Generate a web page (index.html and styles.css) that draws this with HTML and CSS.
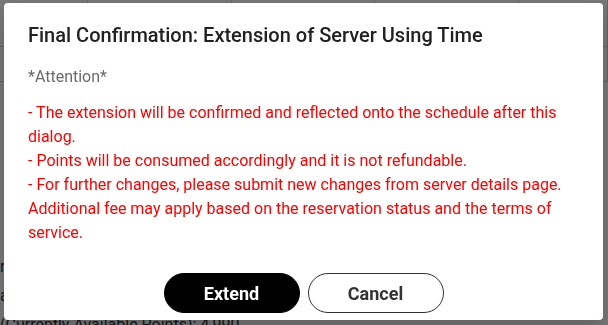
FILE: index.html
```html
<!DOCTYPE html>
<html lang="en">
<head>
<meta charset="utf-8">
<title>Final Confirmation</title>
<link rel="stylesheet" href="styles.css">
</head>
<body>
<div class="page">
  <div class="sheet">
    <div class="cell"></div><div class="cell"></div><div class="cell"></div><div class="cell"></div><div class="cell"></div>
    <div class="cell"></div><div class="cell"></div><div class="cell"></div><div class="cell"></div><div class="cell"></div>
  </div>
  <div class="notes">
    <p>remaining time</p>
    <p>additional points</p>
    <p>(Currently Available Points): 4,990</p>
  </div>
</div>

<div class="overlay"></div>

<div class="dialog" role="dialog" aria-labelledby="dlg-title">
  <h2 class="dialog-title" id="dlg-title">Final Confirmation: Extension of Server Using Time</h2>
  <div class="dialog-content">
    <p class="attention">*Attention*</p>
    <div class="warning">
      <p>- The extension will be confirmed and reflected onto the schedule after this dialog.</p>
      <p>- Points will be consumed accordingly and it is not refundable.</p>
      <p>- For further changes, please submit new changes from server details page. Additional fee may apply based on the reservation status and the terms of service.</p>
    </div>
  </div>
  <div class="dialog-actions">
    <button class="btn btn-primary" type="button">Extend</button>
    <button class="btn btn-outline" type="button">Cancel</button>
  </div>
</div>
</body>
</html>
```

FILE: styles.css
```css
html, body {
  margin: 0;
  padding: 0;
}

body {
  width: 608px;
  height: 325px;
  overflow: hidden;
  background: #ffffff;
  font-family: Roboto, "Liberation Sans", Arial, sans-serif;
}

.page {
  width: 608px;
  height: 325px;
}

.sheet {
  display: grid;
  grid-template-columns: 88px 144px 143px 144px 1fr;
  grid-template-rows: 47px 35px;
  height: 82px;
}

.cell {
  border-right: 1px solid #d2d2d2;
  border-bottom: 1px solid #d2d2d2;
}

.notes {
  padding-top: 170px;
  color: #333333;
  font-size: 16px;
  line-height: 29px;
}

.notes p {
  margin: 0;
  white-space: nowrap;
}

.overlay {
  position: fixed;
  inset: 0;
  background: rgba(0, 0, 0, 0.53);
}

.dialog {
  position: fixed;
  left: 4px;
  top: 3px;
  width: 599px;
  height: 317px;
  box-sizing: border-box;
  background: #ffffff;
  border-radius: 4px;
  box-shadow: 0 8px 20px rgba(0, 0, 0, 0.2);
  display: flex;
  flex-direction: column;
}

.dialog-title {
  margin: 0;
  padding: 16px 24px 0;
  font-size: 20px;
  font-weight: 500;
  line-height: 32px;
  color: #212121;
}

.dialog-content {
  padding: 14px 8px 0 24px;
  font-size: 16px;
  line-height: 24px;
}

.attention {
  margin: 0 0 12px;
  color: #6b6b6b;
}

.warning {
  color: #ff0000;
}

.warning p {
  margin: 0;
}

.dialog-actions {
  display: flex;
  justify-content: center;
  gap: 8px;
  margin-top: 28px;
}

.btn {
  box-sizing: border-box;
  width: 136px;
  height: 40px;
  border-radius: 20px;
  font-family: Roboto, "Liberation Sans", Arial, sans-serif;
  font-size: 18px;
  font-weight: 700;
  cursor: pointer;
  padding: 0;
}

.btn-primary {
  background: #000000;
  color: #ffffff;
  border: 1px solid #000000;
}

.btn-outline {
  background: #ffffff;
  color: #333333;
  border: 1px solid #333333;
}
```
